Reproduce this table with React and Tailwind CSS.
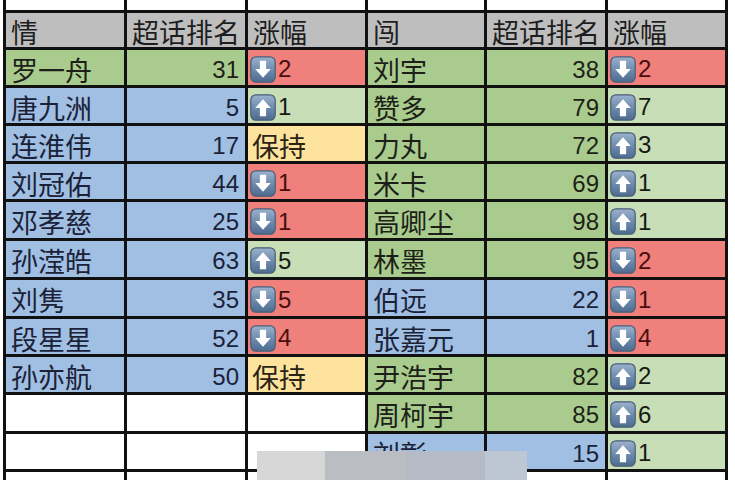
import React from "react";

const GRAY = "bg-[#bfbebe]";
const GREEN = "bg-[#a9cc8e]";
const BLUE = "bg-[#a0bfe3]";
const RED = "bg-[#ef807b]";
const LIGHT = "bg-[#c8deb7]";
const YELLOW = "bg-[#fde39d]";

const left = [
  ["罗一舟", 31, "down", 2, GREEN],
  ["唐九洲", 5, "up", 1, BLUE],
  ["连淮伟", 17, "same", 0, BLUE],
  ["刘冠佑", 44, "down", 1, BLUE],
  ["邓孝慈", 25, "down", 1, BLUE],
  ["孙滢皓", 63, "up", 5, BLUE],
  ["刘隽", 35, "down", 5, BLUE],
  ["段星星", 52, "down", 4, BLUE],
  ["孙亦航", 50, "same", 0, BLUE],
];

const right = [
  ["刘宇", 38, "down", 2, GREEN],
  ["赞多", 79, "up", 7, GREEN],
  ["力丸", 72, "up", 3, GREEN],
  ["米卡", 69, "up", 1, GREEN],
  ["高卿尘", 98, "up", 1, GREEN],
  ["林墨", 95, "down", 2, GREEN],
  ["伯远", 22, "down", 1, BLUE],
  ["张嘉元", 1, "down", 4, BLUE],
  ["尹浩宇", 82, "up", 2, GREEN],
  ["周柯宇", 85, "up", 6, GREEN],
  ["刘彰", 15, "up", 1, BLUE],
];

const cjk = { fontFamily: '"Noto Sans CJK SC", "Noto Sans", sans-serif' };
const num = { fontFamily: '"Liberation Sans", Arial, sans-serif' };

function ArrowIcon({ dir }) {
  return (
    <svg width="26" height="27" viewBox="0 0 25 26" className="shrink-0">
      <defs>
        <linearGradient id={"g" + dir} x1="0" y1="0" x2="0" y2="1">
          <stop offset="0" stopColor="#9bb2cc" />
          <stop offset="0.5" stopColor="#6f8cae" />
          <stop offset="1" stopColor="#4d6b8f" />
        </linearGradient>
      </defs>
      <rect x="0.75" y="0.75" width="23.5" height="24.5" rx="5" fill={"url(#g" + dir + ")"} stroke="#4a5f78" strokeWidth="1.2" />
      {dir === "down" ? (
        <path d="M9.5 4.5h6v8h4.5L12.5 21 5 12.5h4.5z" fill="#fff" />
      ) : (
        <path d="M9.5 21.5h6v-8h4.5L12.5 5 5 13.5h4.5z" fill="#fff" />
      )}
    </svg>
  );
}

function Cells({ row }) {
  if (!row) {
    return (
      <>
        <div className="bg-white" />
        <div className="bg-white" />
        <div className="bg-white" />
      </>
    );
  }
  const [name, rank, dir, delta, bg] = row;
  const changeBg = dir === "down" ? RED : dir === "up" ? LIGHT : YELLOW;
  const nameColor = bg === BLUE ? "text-[#1b2238]" : "text-[#1d1f18]";
  return (
    <>
      <div className={`${bg} ${nameColor} flex items-center pl-[5px] pt-[3px] text-[27px] leading-none`} style={cjk}>
        {name}
      </div>
      <div className={`${bg} ${nameColor} flex items-center justify-end pr-[6px] pt-[4px] text-[24px] leading-none`} style={num}>
        {rank}
      </div>
      <div className={`${changeBg} flex items-center pl-[2px] pt-[3px]`}>
        {dir === "same" ? (
          <span className="pl-[2px] text-[27px] leading-none text-[#2a2416]" style={cjk}>保持</span>
        ) : (
          <>
            <ArrowIcon dir={dir} />
            <span
              className={`ml-[2px] text-[24px] leading-none ${dir === "down" ? "text-[#4a0e0e]" : "text-[#161a12]"}`}
              style={num}
            >
              {delta}
            </span>
          </>
        )}
      </div>
    </>
  );
}

export default function App() {
  const rows = Array.from({ length: 12 }, (_, i) => i);
  return (
    <div className="relative h-[480px] w-[735px] overflow-hidden bg-white">
      <div className="ml-[3px] grid w-[725px] grid-cols-[118px_118px_117px_116px_118px_117px] grid-rows-[10px_34px_35px_35px_35px_35px_36px_36px_36px_35px_35px_36px_35px_40px] gap-[3px] bg-[#111111] px-[3px]">
        {Array.from({ length: 6 }, (_, i) => (
          <div key={"t" + i} className="bg-white" />
        ))}
        {["情", "超话排名", "涨幅", "闯", "超话排名", "涨幅"].map((h, i) => (
          <div key={"h" + i} className={`${GRAY} flex items-center pl-[5px] pt-[2px] text-[27px] leading-none text-[#1e1e1e]`} style={cjk}>
            {h}
          </div>
        ))}
        {rows.map((i) => (
          <React.Fragment key={i}>
            <Cells row={left[i]} />
            <Cells row={right[i]} />
          </React.Fragment>
        ))}
      </div>

      {/* watermark strip over the bottom */}
      <div className="absolute bottom-0 left-[257px] flex h-[29px]">
        <div className="w-[68px] bg-[#d7d7d7]" />
        <div className="w-[80px] bg-[#babdc1]" />
        <div className="w-[80px] bg-[#b4bbc5]" />
        <div className="w-[42px] bg-[#bdc7d4]" />
      </div>
    </div>
  );
}
